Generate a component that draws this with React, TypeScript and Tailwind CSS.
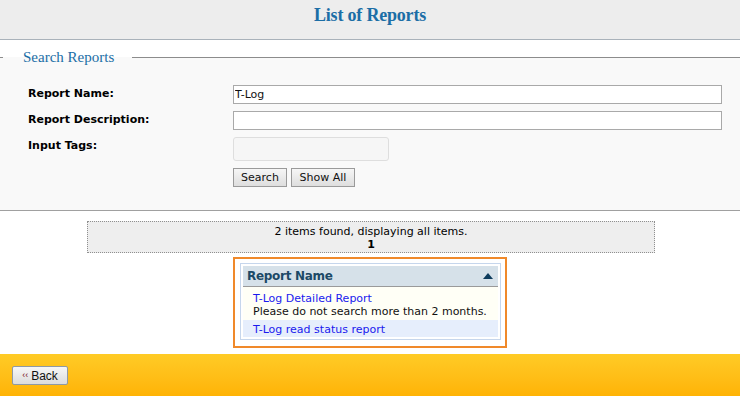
import React from "react";

export default function App() {
  return (
    <div
      className="w-[740px] h-[396px] flex flex-col bg-white text-[11px] text-black overflow-hidden"
      style={{ fontFamily: '"DejaVu Sans", Verdana, sans-serif' }}
    >
      <header className="h-[40px] shrink-0 bg-[#ededed] border-b border-[#a9b2ba] flex justify-center">
        <h1
          className="pt-[3px] text-[18px] leading-[24px] font-bold text-[#1b6ea6] tracking-[-0.2px]"
          style={{ fontFamily: '"Liberation Serif", serif' }}
        >
          List of Reports
        </h1>
      </header>

      <main className="flex-1 flex flex-col">
        <div className="pt-[8px]">
          <fieldset className="bg-[#f9f9f9] border-t border-b border-t-[#8c8c8c] border-b-[#a0a0a0]">
            <legend
              className="ml-[3px] pl-[20px] pr-[18px] text-[15px] leading-[18px] text-[#1b6ea6]"
              style={{ fontFamily: '"Liberation Serif", serif' }}
            >
              Search Reports
            </legend>
            <div className="grid grid-cols-[205px_1fr] gap-y-[7px] pl-[28px] pr-[18px] pt-[19px] pb-[23px]">
              <label className="font-bold leading-[16px] pt-[1px]">Report Name:</label>
              <input
                defaultValue="T-Log"
                className="h-[19px] w-full border border-[#a9a9a9] bg-white px-[1px] text-[11px] text-[#111] outline-none"
              />
              <label className="font-bold leading-[16px] pt-[1px]">Report Description:</label>
              <input className="h-[19px] w-full border border-[#a9a9a9] bg-white px-[1px] text-[11px] outline-none" />
              <label className="font-bold leading-[16px] pt-[1px]">Input Tags:</label>
              <div className="h-[24px] w-[156px] rounded-[3px] border border-[#dedede] bg-[#f6f6f6]" />
              <div />
              <div className="flex gap-[4px]">
                <button className="h-[19px] w-[54px] border border-[#9a9a9a] bg-gradient-to-b from-[#f6f6f6] to-[#dedede] text-[11px] leading-[15px] text-[#111]">
                  Search
                </button>
                <button className="h-[19px] w-[64px] border border-[#9a9a9a] bg-gradient-to-b from-[#f6f6f6] to-[#dedede] text-[11px] leading-[15px] text-[#111]">
                  Show All
                </button>
              </div>
            </div>
          </fieldset>
        </div>

        <div className="pt-[10px] flex flex-col items-center">
          <div className="w-[568px] h-[32px] border border-dotted border-[#8f8f8f] bg-[#eeeeee] text-center leading-[13px] pt-[3px] ml-[2px]">
            <div>2 items found, displaying all items.</div>
            <div className="font-bold">1</div>
          </div>

          <div className="mt-[4px] w-[274px] border-2 border-[#f0892a] bg-white pt-[4px] pl-[5px] pr-[4px] pb-[6px]">
            <div className="border border-[#c6d6ec] p-[2px]">
              <div className="h-[21px] bg-[#d6e1e9] border-b border-[#9a9a9a] flex items-center justify-between pl-[4px] pr-[5px]">
                <span className="font-bold text-[12px] text-[#1c4966] tracking-[-0.3px]">Report Name</span>
                <svg width="10" height="6" viewBox="0 0 10 6">
                  <path d="M0 6 L5 0 L10 6 Z" fill="#0e3c5d" />
                </svg>
              </div>
              <div className="bg-[#fffff6] pl-[10px] pt-[5px] pb-[2px] leading-[13px]">
                <div className="text-[#1a1aee]">T-Log Detailed Report</div>
                <div className="text-[#111]">Please do not search more than 2 months.</div>
              </div>
              <div className="bg-[#e6eefc] pl-[10px] pt-[3px] pb-[1px] leading-[13px]">
                <div className="text-[#1a1aee]">T-Log read status report</div>
              </div>
            </div>
          </div>
        </div>
      </main>

      <footer className="h-[42px] shrink-0 bg-gradient-to-b from-[#ffcb25] to-[#ffb304] pt-[12px] pl-[12px]">
        <button
          className="h-[19px] w-[56px] border border-[#8e9aa6] rounded-[2px] bg-gradient-to-b from-[#f7f7f7] to-[#dcdcdc] flex items-center justify-center gap-[3px] text-[12px] text-[#111]"
          style={{ fontFamily: '"Liberation Sans", Arial, sans-serif' }}
        >
          <span className="text-[9px] text-[#7a1020] leading-none">‹‹</span>
          <span className="leading-none">Back</span>
        </button>
      </footer>
    </div>
  );
}
